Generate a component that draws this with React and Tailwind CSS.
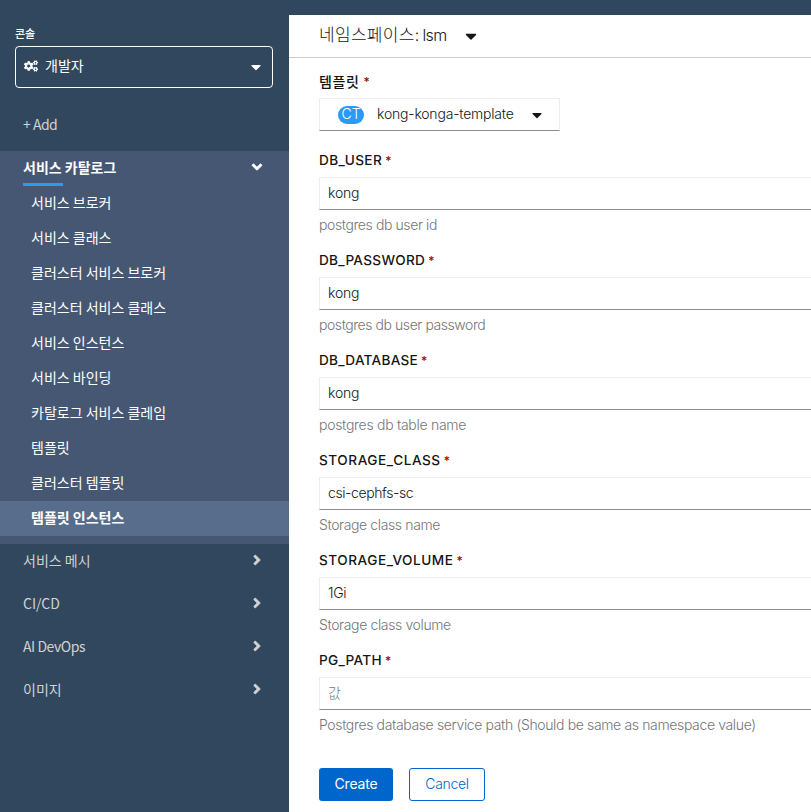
import { FaCogs, FaCaretDown, FaAngleDown, FaAngleRight } from 'react-icons/fa';

const catalogItems = [
  '서비스 브로커',
  '서비스 클래스',
  '클러스터 서비스 브로커',
  '클러스터 서비스 클래스',
  '서비스 인스턴스',
  '서비스 바인딩',
  '카탈로그 서비스 클레임',
  '템플릿',
  '클러스터 템플릿',
  '템플릿 인스턴스',
];

const groups = [
  { name: '서비스 메시', text: 'pb-px' },
  { name: 'CI/CD', text: '' },
  { name: 'AI DevOps', text: 'tracking-[-0.45px]' },
  { name: '이미지', text: 'pb-px' },
];

const fields = [
  { name: 'DB_USER', value: 'kong', help: 'postgres db user id', label: 'tracking-[0.4px]', input: 'tracking-[-0.2px]', hint: 'tracking-[-0.4px]' },
  { name: 'DB_PASSWORD', value: 'kong', help: 'postgres db user password', label: 'tracking-[0.3px]', input: 'tracking-[-0.2px]', hint: 'tracking-[-0.44px]' },
  { name: 'DB_DATABASE', value: 'kong', help: 'postgres db table name', label: 'tracking-[0.27px]', input: 'tracking-[-0.2px]', hint: 'tracking-[-0.28px]' },
  { name: 'STORAGE_CLASS', value: 'csi-cephfs-sc', help: 'Storage class name', label: 'tracking-[0.55px]', input: 'tracking-[-0.4px]', hint: 'tracking-[-0.38px]' },
  { name: 'STORAGE_VOLUME', value: '1Gi', help: 'Storage class volume', label: 'tracking-[0.53px]', input: 'tracking-[-0.3px]', hint: 'tracking-[-0.37px]' },
  { name: 'PG_PATH', value: '', help: 'Postgres database service path (Should be same as namespace value)', label: 'tracking-[0.3px]', input: '', hint: 'tracking-[-0.36px]' },
];

function Sidebar() {
  return (
    <nav className="flex w-[289px] shrink-0 flex-col bg-[#31475e] font-['Noto_Sans_CJK_KR',sans-serif] text-sm text-white">
      <div className="px-[15px] pt-[25px]">
        <div className="h-4 text-[11px] leading-4 font-medium">콘솔</div>
        <button className="mt-[5px] flex h-[42px] w-[258px] items-center rounded border border-white pr-2 pl-2">
          <FaCogs className="mb-0.5 size-[14px]" />
          <span className="ml-[7px] pb-1">개발자</span>
          <FaCaretDown className="ml-auto size-4" />
        </button>
      </div>
      <a className="mt-[26px] mb-px flex h-5 items-center pl-[23px] tracking-[-0.5px] text-[#d2d2d2]">+ Add</a>
      <section className="mt-4 bg-[#455773] pb-2">
        <div className="flex h-[35px] flex-col pr-6 pl-[23px]">
          <div className="flex h-8 items-center justify-between font-bold">
            <span>서비스 카탈로그</span>
            <FaAngleDown className="size-4" stroke="currentColor" strokeWidth="16" />
          </div>
          <div className="h-[3px] w-10 bg-[#2b9af3]" />
        </div>
        {catalogItems.map((item, i) => (
          <a
            key={item}
            className={
              i === 9
                ? 'flex h-[35px] items-center bg-[#586d8c] pb-1 pl-[31px] font-bold'
                : 'flex h-[35px] items-center pb-1 pl-[31px]'
            }
          >
            {item}
          </a>
        ))}
      </section>
      {groups.map((group) => (
        <a key={group.name} className="flex h-[43px] items-center justify-between pr-6 pb-[11px] pl-[23px] text-[#d2d2d2]">
          <span className={group.text}>{group.name}</span>
          <FaAngleRight className="size-4" stroke="currentColor" strokeWidth="16" />
        </a>
      ))}
    </nav>
  );
}

function Field({ name, value, help, label, input, hint }) {
  return (
    <div className="mb-4">
      <label className="flex h-5 items-center gap-[3px] font-medium">
        <span className={`text-[13.6px] ${label}`}>{name}</span>
        <span className="text-xs text-[#a30000]">*</span>
      </label>
      <input
        className={`mt-1.5 block h-[33px] w-full border border-r-0 border-[#ededed] border-b-[#8a8d90] px-2 pb-0.5 font-light placeholder:text-[#72767b] ${input}`}
        defaultValue={value}
        placeholder="값"
      />
      <div className={`mt-[5px] h-5 leading-5 font-light whitespace-nowrap text-[#737679] ${hint}`}>{help}</div>
    </div>
  );
}

export default function App() {
  return (
    <div className="flex h-[812px] w-[811px] overflow-hidden bg-[#31475e]">
      <Sidebar />
      <main className="mt-[15px] min-w-0 flex-1 bg-white font-['Inter','Noto_Sans_CJK_KR',sans-serif] text-sm text-[#151515]">
        <header className="flex h-[43px] items-center border-b border-[#ccc] pl-[30px]">
          <span className="text-base font-light">
            <span className="text-[17px] tracking-[0.3px]">네임스페이스</span>
            <span className="tracking-[-0.6px]">: lsm</span>
          </span>
          <FaCaretDown className="ml-[15px] size-[18px]" />
        </header>
        <form className="pt-[14px] pl-[30px]">
          <label className="flex h-5 items-center gap-1 font-medium">
            <span className="pb-px tracking-[0.6px]">템플릿</span>
            <span className="text-xs text-[#a30000]">*</span>
          </label>
          <button
            type="button"
            className="mt-1.5 mb-5 flex h-[33px] w-[241px] items-center border border-[#ededed] border-b-[#8a8d90] pr-3.5 pl-[18px] font-light"
          >
            <span className="flex h-[18px] w-[26px] items-center justify-center rounded-full bg-[#2b9af3] pb-px text-white">CT</span>
            <span className="ml-[13px] pb-0.5 tracking-[-0.2px] whitespace-nowrap">kong-konga-template</span>
            <FaCaretDown className="ml-auto size-4" />
          </button>
          {fields.map((field) => (
            <Field key={field.name} {...field} />
          ))}
          <div className="flex gap-4 pt-[17px]">
            <button type="button" className="h-[33px] w-[74px] rounded-[3px] bg-[#06c] pb-0.5 tracking-[-0.2px] text-white">Create</button>
            <button type="button" className="h-[33px] w-[76px] rounded-[3px] border border-[#06c] pb-0.5 font-light tracking-[-0.3px] text-[#06c]">Cancel</button>
          </div>
        </form>
      </main>
    </div>
  );
}
